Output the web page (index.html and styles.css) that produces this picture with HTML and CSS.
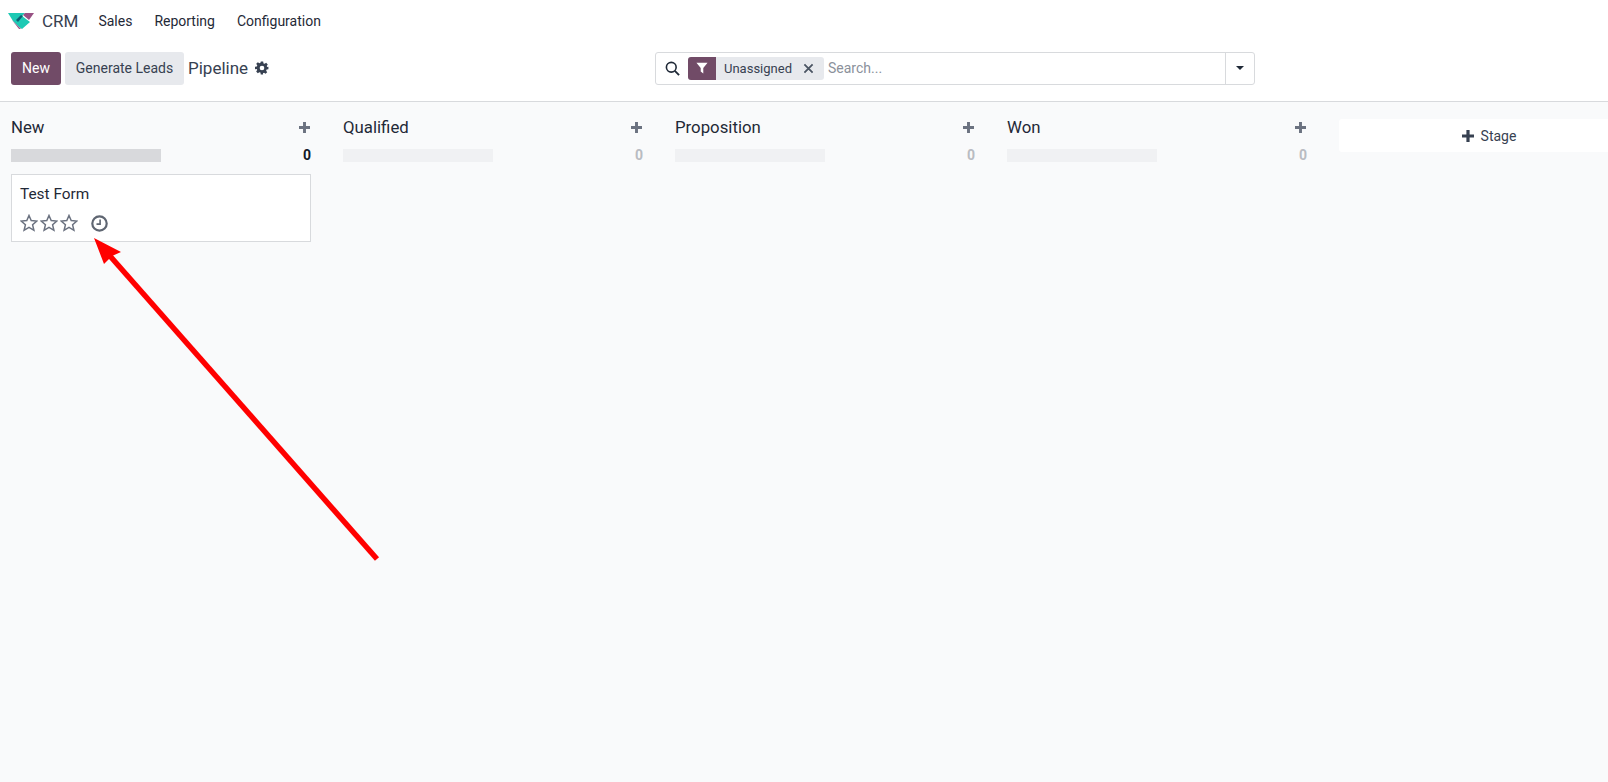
FILE: index.html
```html
<!DOCTYPE html>
<html lang="en">
<head>
  <meta charset="UTF-8" />
  <title>CRM - Pipeline</title>
  <link rel="stylesheet" href="styles.css">
</head>
<body>
  <!-- Top navigation -->
  <header class="navbar">
    <svg class="app-logo" viewBox="0 0 26 16" width="26" height="16" aria-hidden="true">
      <polygon points="0,0 17,0 14,3 22,9 14,16 11,14 5,8" fill="#1dc9b4"/>
      <polygon points="17,0 26,0 21,7 15,2" fill="#985184"/>
      <polygon points="4,7 13,16 11,16" fill="#985184"/>
      <polygon points="8,7 13,2 15,3 10,9" fill="#0f5f74"/>
    </svg>
    <span class="app-name">CRM</span>
    <nav class="menu">
      <a>Sales</a>
      <a>Reporting</a>
      <a>Configuration</a>
    </nav>
  </header>

  <!-- Control panel -->
  <div class="control-panel">
    <div class="cp-left">
      <button class="btn btn-primary">New</button>
      <button class="btn btn-secondary">Generate Leads</button>
      <span class="breadcrumb">Pipeline</span>
      <svg class="gear" viewBox="0 0 24 24" width="14" height="14" aria-hidden="true">
        <path fill="#374151" fill-rule="evenodd" d="M10 1h4l.6 3.1 1.9.8 2.6-1.8 2.8 2.8-1.8 2.6.8 1.9L23 10v4l-3.1.6-.8 1.9 1.8 2.6-2.8 2.8-2.6-1.8-1.9.8L13.9 23h-4l-.6-3.1-1.9-.8-2.6 1.8-2.8-2.8 1.8-2.6-.8-1.9L0 14v-4l3.1-.6.8-1.9-1.8-2.6 2.8-2.8 2.6 1.8 1.9-.8zM12 8a4 4 0 1 0 0 8 4 4 0 0 0 0-8z"/>
      </svg>
    </div>
    <div class="search">
      <svg class="search-icon" viewBox="0 0 16 16" width="15" height="15" aria-hidden="true">
        <circle cx="6.7" cy="6.7" r="5.2" fill="none" stroke="#1f2937" stroke-width="1.7"/>
        <line x1="10.5" y1="10.5" x2="15" y2="15" stroke="#1f2937" stroke-width="2"/>
      </svg>
      <div class="facet">
        <span class="facet-icon">
          <svg viewBox="0 0 14 14" width="12" height="12" aria-hidden="true">
            <polygon points="0.5,1 13.5,1 8.5,7 8.5,13.5 5.5,11 5.5,7" fill="#fff"/>
          </svg>
        </span>
        <span class="facet-label">Unassigned</span>
        <svg class="facet-close" viewBox="0 0 12 12" width="11" height="11" aria-hidden="true">
          <path d="M1.5 1.5l9 9M10.5 1.5l-9 9" stroke="#4b5563" stroke-width="2"/>
        </svg>
      </div>
      <span class="search-input">Search...</span>
      <span class="search-toggle"><i class="caret"></i></span>
    </div>
  </div>

  <!-- Kanban -->
  <main class="kanban">
    <section class="column">
      <div class="col-head"><span>New</span><svg class="plus" viewBox="0 0 12 12" width="11" height="11"><use href="#plus-shape"/></svg></div>
      <div class="col-progress"><div class="bar"></div><span class="count">0</span></div>
      <article class="card">
        <div class="card-title">Test Form</div>
        <div class="card-foot">
          <svg class="star" viewBox="0 0 18 18" width="18" height="18"><use href="#star-shape"/></svg>
          <svg class="star" viewBox="0 0 18 18" width="18" height="18"><use href="#star-shape"/></svg>
          <svg class="star" viewBox="0 0 18 18" width="18" height="18"><use href="#star-shape"/></svg>
          <svg class="clock" viewBox="0 0 17 17" width="17" height="17" aria-hidden="true">
            <circle cx="8.5" cy="8.5" r="7.2" fill="none" stroke="#5f6672" stroke-width="2.2"/>
            <path d="M9.1 4.5v4.6H5.5" fill="none" stroke="#5f6672" stroke-width="1.6"/>
          </svg>
        </div>
      </article>
    </section>
    <section class="column muted">
      <div class="col-head"><span>Qualified</span><svg class="plus" viewBox="0 0 12 12" width="11" height="11"><use href="#plus-shape"/></svg></div>
      <div class="col-progress"><div class="bar"></div><span class="count">0</span></div>
    </section>
    <section class="column muted">
      <div class="col-head"><span>Proposition</span><svg class="plus" viewBox="0 0 12 12" width="11" height="11"><use href="#plus-shape"/></svg></div>
      <div class="col-progress"><div class="bar"></div><span class="count">0</span></div>
    </section>
    <section class="column muted">
      <div class="col-head"><span>Won</span><svg class="plus" viewBox="0 0 12 12" width="11" height="11"><use href="#plus-shape"/></svg></div>
      <div class="col-progress"><div class="bar"></div><span class="count">0</span></div>
    </section>
    <button class="add-stage"><svg class="plus plus-dark" viewBox="0 0 12 12" width="12" height="12"><use href="#plus-shape"/></svg>Stage</button>
  </main>

  <!-- shared shapes -->
  <svg class="defs" aria-hidden="true">
    <symbol id="star-shape" viewBox="0 0 18 18">
      <polygon points="9,1.5 11.2,6.6 16.8,7.1 12.6,10.8 13.9,16.3 9,13.4 4.1,16.3 5.4,10.8 1.2,7.1 6.8,6.6" fill="none" stroke="#6b7280" stroke-width="1.5"/>
    </symbol>
    <symbol id="plus-shape" viewBox="0 0 12 12">
      <path d="M4.4 0h3.2v4.4H12v3.2H7.6V12H4.4V7.6H0V4.4h4.4z" fill="currentColor"/>
    </symbol>
  </svg>

  <!-- Red annotation arrow drawn over the page -->
  <svg class="annotation" viewBox="0 0 1608 782" aria-hidden="true">
    <line x1="377" y1="559" x2="110" y2="256" stroke="#ff0000" stroke-width="5.5"/>
    <polygon points="94,238 121,252 112,256 104,264" fill="#ff0000"/>
  </svg>
</body>
</html>
```

FILE: styles.css
```css
:root {
  --primary: #714b67;
  --text: #374151;
  --border: #d8dadd;
  --page-bg: #f9fafb;
}

* {
  margin: 0;
  padding: 0;
  box-sizing: border-box;
}
body {
  font-family: 'Roboto', sans-serif;
  font-size: 14px;
  color: var(--text);
  background: var(--page-bg);
  height: 782px;
  overflow: hidden;
}

/* Navbar */
.navbar {
  display: flex;
  align-items: center;
  height: 42px;
  padding-left: 8px;
  background: #fff;
}
.app-logo { margin-right: 8px; }
.app-name { font-size: 17px; }
.menu {
  display: flex;
  gap: 22px;
  margin-left: 20px;
  color: #1f2937;
}

/* Control panel */
.control-panel {
  position: relative;
  display: flex;
  align-items: center;
  height: 60px;
  padding: 0 11px 7px;
  background: #fff;
  border-bottom: 1px solid var(--border);
}
.cp-left {
  display: flex;
  align-items: center;
  width: 644px;
}
.btn {
  height: 33px;
  border: none;
  border-radius: 3px;
  font: inherit;
}
.btn-primary {
  width: 50px;
  margin-right: 4px;
  background: var(--primary);
  color: #fff;
}
.btn-secondary {
  width: 119px;
  margin-right: 4px;
  background: #e7e9ed;
  color: var(--text);
}
.breadcrumb {
  font-size: 17px;
  margin-right: 7px;
}
.search {
  display: flex;
  align-items: center;
  width: 600px;
  height: 33px;
  background: #fff;
  border: 1px solid var(--border);
  border-radius: 3px;
}
.search-icon { margin: 0 8px 0 9px; }
.facet {
  display: flex;
  align-items: center;
  width: 136px;
  height: 23px;
  background: #e7e9ed;
  border-radius: 3px;
  overflow: hidden;
}
.facet-icon {
  display: flex;
  align-items: center;
  justify-content: center;
  width: 28px;
  height: 23px;
  background: var(--primary);
}
.facet-label {
  font-size: 13px;
  margin-left: 8px;
}
.facet-close { margin-left: 11px; }
.search-input {
  flex: 1;
  margin-left: 4px;
  color: #8b919b;
}
.search-toggle {
  display: flex;
  align-items: center;
  justify-content: center;
  width: 29px;
  height: 100%;
  border-left: 1px solid var(--border);
}
.caret {
  width: 0;
  height: 0;
  border-left: 4px solid transparent;
  border-right: 4px solid transparent;
  border-top: 4px solid #1f2937;
}

/* Kanban */
.kanban {
  display: flex;
  gap: 32px;
  padding-left: 11px;
}
.column {
  flex: 0 0 300px;
  padding-top: 15px;
}
.col-head {
  display: flex;
  justify-content: space-between;
  align-items: center;
  height: 20px;
  font-size: 16.8px;
  color: #1f2937;
}
.col-head .plus { margin-right: 1px; }
.plus { color: #6b7280; }
.col-progress {
  display: flex;
  justify-content: space-between;
  align-items: center;
  height: 14px;
  margin-top: 11px;
}
.bar {
  width: 150px;
  height: 13px;
  background: #d8d9dc;
}
.count {
  font-weight: 700;
  color: #111827;
}
.muted .bar { background: #f0f1f3; }
.muted .count { color: #b9bcc2; }

.card {
  height: 68px;
  margin-top: 12px;
  padding: 10px 8px;
  background: #fff;
  border: 1px solid var(--border);
}
.card-title {
  font-size: 15.4px;
  line-height: 18px;
  color: #1f2937;
}
.card-foot {
  display: flex;
  align-items: center;
  gap: 2px;
  margin-top: 11px;
}
.clock { margin-left: 11px; }

.add-stage {
  flex: 0 0 300px;
  display: flex;
  align-items: center;
  justify-content: center;
  gap: 7px;
  height: 33px;
  margin-top: 17px;
  border: none;
  border-radius: 3px;
  background: #fff;
  font: inherit;
  color: var(--text);
}
.plus-dark { color: var(--text); }

.defs {
  width: 0;
  height: 0;
  position: absolute;
}

/* Annotation */
.annotation {
  position: absolute;
  top: 0;
  left: 0;
  width: 1608px;
  height: 782px;
  pointer-events: none;
}
```
